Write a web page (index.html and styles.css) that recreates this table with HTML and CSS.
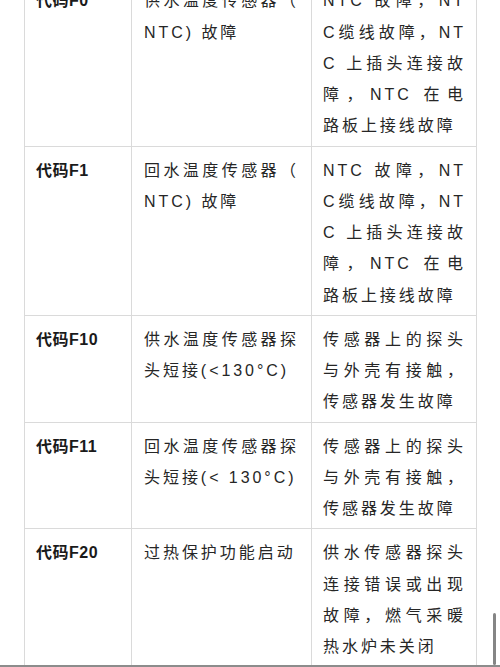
FILE: index.html
```html
<!DOCTYPE html>
<html lang="zh-CN">
<head>
<meta charset="utf-8">
<title>故障代码</title>
<link rel="stylesheet" href="styles.css">
</head>
<body>
<div class="codes">
  <div class="cell code">代码F0</div>
  <div class="cell desc"><span class="ln">供水温度传感器（</span><span class="ln last">NTC) 故障</span></div>
  <div class="cell cause"><span class="ln">NTC 故障，NT</span><span class="ln">C缆线故障，NT</span><span class="ln">C 上插头连接故</span><span class="ln">障，NTC 在电</span><span class="ln last">路板上接线故障</span></div>

  <div class="cell code">代码F1</div>
  <div class="cell desc"><span class="ln">回水温度传感器（</span><span class="ln last">NTC) 故障</span></div>
  <div class="cell cause"><span class="ln">NTC 故障，NT</span><span class="ln">C缆线故障，NT</span><span class="ln">C 上插头连接故</span><span class="ln">障，NTC 在电</span><span class="ln last">路板上接线故障</span></div>

  <div class="cell code">代码F10</div>
  <div class="cell desc"><span class="ln">供水温度传感器探</span><span class="ln last">头短接(&lt;130°C)</span></div>
  <div class="cell cause"><span class="ln">传感器上的探头</span><span class="ln">与外壳有接触，</span><span class="ln last">传感器发生故障</span></div>

  <div class="cell code">代码F11</div>
  <div class="cell desc"><span class="ln">回水温度传感器探</span><span class="ln last">头短接(&lt; 130°C)</span></div>
  <div class="cell cause"><span class="ln">传感器上的探头</span><span class="ln">与外壳有接触，</span><span class="ln last">传感器发生故障</span></div>

  <div class="cell code">代码F20</div>
  <div class="cell desc"><span class="ln last">过热保护功能启动</span></div>
  <div class="cell cause"><span class="ln">供水传感器探头</span><span class="ln">连接错误或出现</span><span class="ln">故障，燃气采暖</span><span class="ln last">热水炉未关闭</span></div>
</div>
<div class="edge"></div>
<div class="thumb"></div>
</body>
</html>
```

FILE: styles.css
```css
html, body {
  margin: 0;
  padding: 0;
  background: #ffffff;
}

body {
  height: 667px;
  overflow: hidden;
  font-family: "Liberation Sans", "Noto Sans CJK SC", sans-serif;
  color: #262626;
}

.codes {
  display: grid;
  grid-template-columns: 107px 180px 165px;
  margin: -22.75px 0 0 24px;
  width: 453px;
  box-sizing: border-box;
  border-left: 1px solid #dadada;
}

.cell {
  box-sizing: border-box;
  border-right: 1px solid #dadada;
  border-bottom: 1px solid #dadada;
  padding: 8px 11px 4px 11px;
  font-size: 16px;
  line-height: 31.25px;
}

.code {
  font-weight: bold;
  letter-spacing: 0.5px;
  color: #1a1a1a;
}

.desc {
  padding-left: 12px;
  padding-right: 12px;
  letter-spacing: 2.95px;
}

.cause {
  padding-right: 10px;
  letter-spacing: 2.95px;
}

.ln {
  display: block;
  white-space: nowrap;
  text-align: justify;
  text-align-last: justify;
}

.ln.last {
  text-align-last: left;
}

.edge {
  position: fixed;
  left: 0;
  right: 0;
  bottom: 0;
  height: 2px;
  background: #8c8c8c;
}

.thumb {
  position: fixed;
  right: 4px;
  bottom: 2px;
  width: 3px;
  height: 52px;
  border-radius: 2px;
  background: #858585;
}
```
